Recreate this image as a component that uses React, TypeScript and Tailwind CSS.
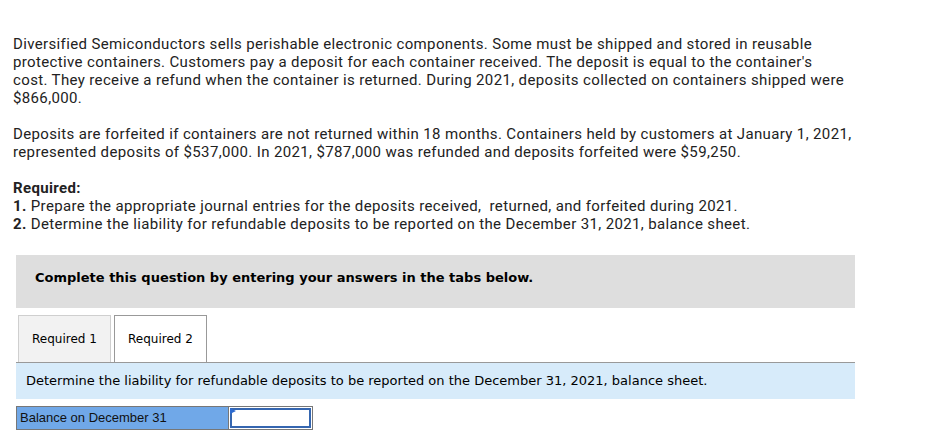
export default function App() {
  return (
    <div className="min-h-[440px] w-[927px] bg-white pl-[13px] pr-[13px] pt-[35px] text-[#222]">
      <div className="font-['Roboto',sans-serif] text-[15px] leading-[18px] tracking-[0.36px]">
        <p>
          Diversified Semiconductors sells perishable electronic components. Some must be shipped and stored in reusable
          <br />
          protective containers. Customers pay a deposit for each container received. The deposit is equal to the container's
          <br />
          cost. They receive a refund when the container is returned. During 2021, deposits collected on containers shipped were
          <br />
          $866,000.
        </p>
        <p className="mt-[18px]">
          Deposits are forfeited if containers are not returned within 18 months. Containers held by customers at January 1, 2021,
          <br />
          represented deposits of $537,000. In 2021, $787,000 was refunded and deposits forfeited were $59,250.
        </p>
        <p className="mt-[18px]">
          <b>Required:</b>
          <br />
          <b>1.</b> Prepare the appropriate journal entries for the deposits received,&nbsp; returned, and forfeited during 2021.
          <br />
          <b>2.</b> Determine the liability for refundable deposits to be reported on the December 31, 2021, balance sheet.
        </p>
      </div>

      <div className="ml-[3px] mt-[22px] w-[839px] font-['DejaVu_Sans',Verdana,sans-serif]">
        {/* Instruction box */}
        <div className="flex h-[53px] items-center bg-[#dedede] px-[19px] pb-[8px] text-[13px] font-bold text-black">
          Complete this question by entering your answers in the tabs below.
        </div>

        {/* Tabs */}
        <div className="mt-[7px] flex gap-[3px] pl-[2px] text-[12px] text-black">
          <div className="flex h-[47px] w-[93px] items-center justify-center border border-b-0 border-[#cfcfcf] bg-[#f2f2f2]">
            Required 1
          </div>
          <div className="flex h-[47px] w-[93px] items-center justify-center border border-b-0 border-[#999] bg-white">
            Required 2
          </div>
        </div>

        <div className="flex h-[37px] items-center border-t border-[#999] bg-[#d7ebfa] pl-[10px] text-[13px] text-black">
          Determine the liability for refundable deposits to be reported on the December 31, 2021, balance sheet.
        </div>

        {/* Answer row */}
        <div className="mt-[7px] flex h-[24px] font-['Liberation_Sans',Arial,sans-serif] text-[13px] text-[#111]">
          <div className="flex w-[213px] items-center border border-[#777] bg-[#70a8e8] pl-[3px]">
            Balance on December 31
          </div>
          <div className="relative w-[84px] border border-l-0 border-[#777] bg-white p-[1px]">
            <div className="h-full w-full border-2 border-[#3566b0]" />
            <svg className="absolute left-[1px] top-[1px]" width="6" height="6" viewBox="0 0 6 6">
              <polygon points="0,0 6,3 0,6" fill="#2d6bd0" />
            </svg>
          </div>
        </div>
      </div>
    </div>
  );
}
